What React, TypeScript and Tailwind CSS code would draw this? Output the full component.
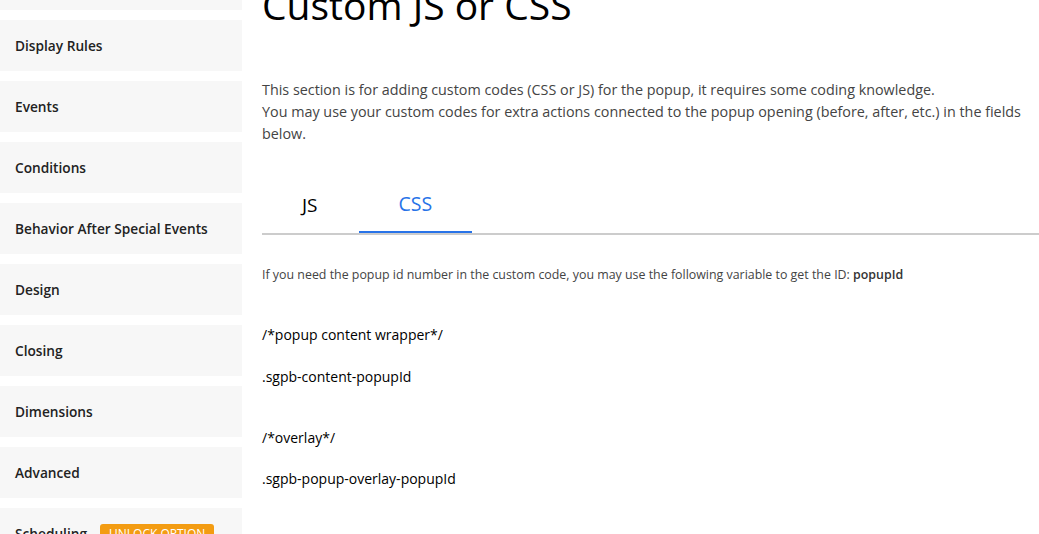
const navItems = [
  "",
  "Display Rules",
  "Events",
  "Conditions",
  "Behavior After Special Events",
  "Design",
  "Closing",
  "Dimensions",
  "Advanced",
];

const App = () => {
  return (
    <div
      className="flex w-[1039px] h-[534px] overflow-hidden bg-white"
      style={{ fontFamily: '"Open Sans", "Noto Sans", sans-serif' }}
    >
      {/* left menu */}
      <div className="w-[242px] shrink-0 flex flex-col gap-[10px] -mt-[41px]">
        {navItems.map((label, i) => (
          <div
            key={i}
            className="h-[51px] shrink-0 bg-[#f7f7f7] flex items-center px-[15px] pt-[1px] text-[13.7px] font-semibold text-[#222]"
          >
            {label}
          </div>
        ))}
        <div className="h-[51px] shrink-0 bg-[#f7f7f7] flex items-center px-[15px] pt-[1px] text-[13.7px] font-semibold text-[#222]">
          <span>Scheduling</span>
          <span className="ml-[13px] bg-[#f39c12] text-white text-[12px] font-normal leading-[16px] px-[9px] py-[2px] rounded-[3px] uppercase">
            Unlock option
          </span>
        </div>
      </div>

      {/* content */}
      <div className="flex-1 pl-[20px] flex flex-col">
        <h1 className="text-[39px] leading-[44px] text-black -mt-[17px]">Custom JS or CSS</h1>

        <div className="mt-[52px] text-[14.35px] leading-[22px] text-[#444]">
          <p>This section is for adding custom codes (CSS or JS) for the popup, it requires some coding knowledge.</p>
          <p>
            You may use your custom codes for extra actions connected to the popup opening (before, after, etc.) in the
            fields below.
          </p>
        </div>

        <div className="mt-[32px] flex border-b-2 border-[#cccccc]">
          <div className="px-[40px] h-[56px] flex items-center text-[19px] font-medium text-black">JS</div>
          <div className="px-[40px] h-[56px] flex items-center text-[19.5px] font-medium text-[#2873e8] border-b-2 border-[#2873e8] -mb-[2px] ml-[1px]">
            CSS
          </div>
        </div>

        <p className="mt-[31px] text-[12.4px] leading-[17px] text-[#444]">
          If you need the popup id number in the custom code, you may use the following variable to get the ID:{" "}
          <b className="font-semibold text-[#333]">popupId</b>
        </p>

        <div className="mt-[42px] text-[14px] font-medium text-black leading-[20px]">
          <div>/*popup content wrapper*/</div>
          <div className="mt-[22px]">.sgpb-content-popupId</div>
          <div className="mt-[41px]">/*overlay*/</div>
          <div className="mt-[21px]">.sgpb-popup-overlay-popupId</div>
        </div>
      </div>
    </div>
  );
};

export default App;
